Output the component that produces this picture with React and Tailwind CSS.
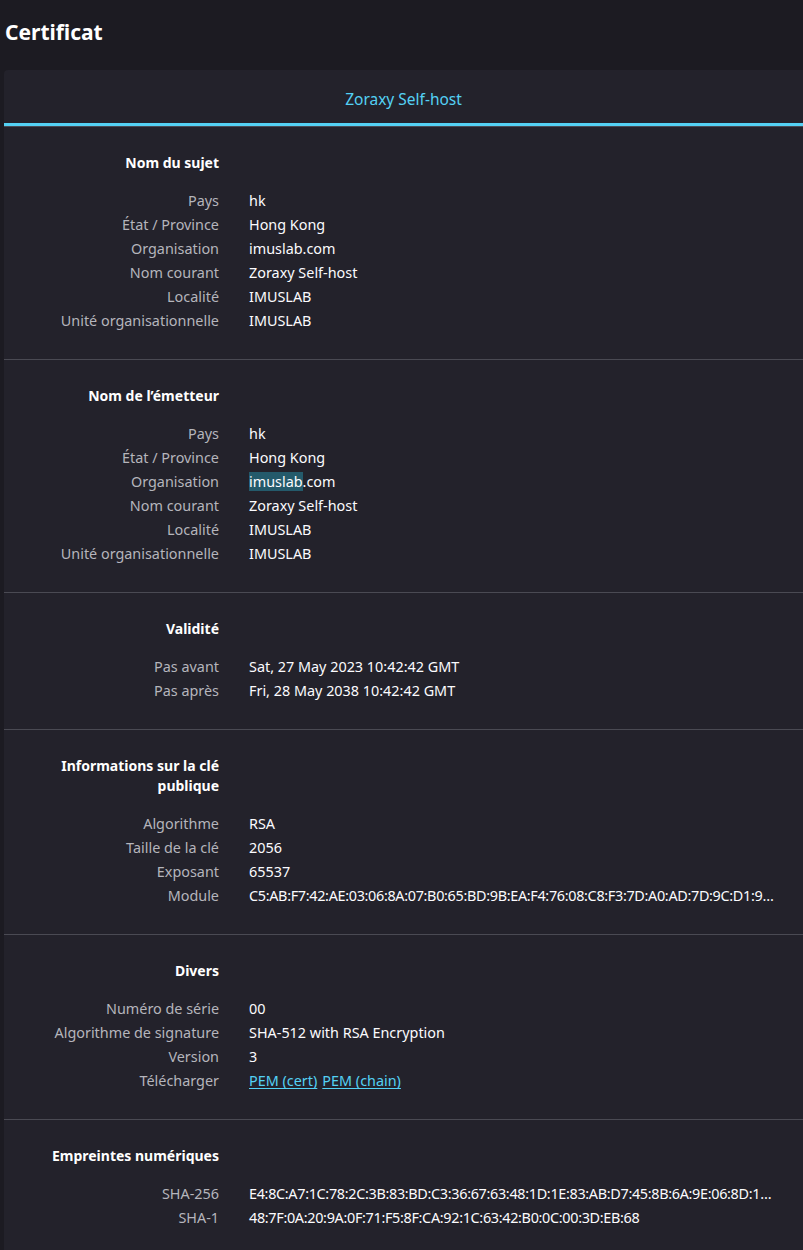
import React from 'react';

const sections = [
    {
        title: 'Nom du sujet',
        rows: [
            ['Pays', 'hk'],
            ['État / Province', 'Hong Kong'],
            ['Organisation', 'imuslab.com'],
            ['Nom courant', 'Zoraxy Self-host'],
            ['Localité', 'IMUSLAB'],
            ['Unité organisationnelle', 'IMUSLAB'],
        ],
    },
    {
        title: 'Nom de l’émetteur',
        rows: [
            ['Pays', 'hk'],
            ['État / Province', 'Hong Kong'],
            ['Organisation', 'selected'],
            ['Nom courant', 'Zoraxy Self-host'],
            ['Localité', 'IMUSLAB'],
            ['Unité organisationnelle', 'IMUSLAB'],
        ],
    },
    {
        title: 'Validité',
        rows: [
            ['Pas avant', 'Sat, 27 May 2023 10:42:42 GMT'],
            ['Pas après', 'Fri, 28 May 2038 10:42:42 GMT'],
        ],
    },
    {
        title: 'Informations sur la clé publique',
        rows: [
            ['Algorithme', 'RSA'],
            ['Taille de la clé', '2056'],
            ['Exposant', '65537'],
            ['Module', 'C5:AB:F7:42:AE:03:06:8A:07:B0:65:BD:9B:EA:F4:76:08:C8:F3:7D:A0:AD:7D:9C:D1:9…', true],
        ],
    },
    {
        title: 'Divers',
        rows: [
            ['Numéro de série', '00'],
            ['Algorithme de signature', 'SHA-512 with RSA Encryption'],
            ['Version', '3'],
            ['Télécharger', 'links'],
        ],
    },
    {
        title: 'Empreintes numériques',
        rows: [
            ['SHA-256', 'E4:8C:A7:1C:78:2C:3B:83:BD:C3:36:67:63:48:1D:1E:83:AB:D7:45:8B:6A:9E:06:8D:1…', true],
            ['SHA-1', '48:7F:0A:20:9A:0F:71:F5:8F:CA:92:1C:63:42:B0:0C:00:3D:EB:68', true],
        ],
    },
];

const Value = ({ value, tight }) => {
    if (value === 'selected') {
        return (
            <span>
                <span className="bg-[#245a6b]">imuslab</span>.com
            </span>
        );
    }
    if (value === 'links') {
        return (
            <span className="flex gap-[5px]">
                <a href="#" className="text-[#54d1f4] underline underline-offset-2">PEM (cert)</a>
                <a href="#" className="text-[#54d1f4] underline underline-offset-2">PEM (chain)</a>
            </span>
        );
    }
    return <span className={`whitespace-nowrap ${tight ? 'tracking-[-0.32px]' : ''}`}>{value}</span>;
};

const Section = ({ title, rows }) => (
    <div className="pt-[26px] pb-[26px] border-b border-[#4a4a53]">
        <div className="flex">
            <div className="w-[170px] ml-[45px] text-right font-bold text-white leading-[20px] text-[14px]">
                {title}
            </div>
        </div>
        <div className="mt-[16px] flex flex-col">
            {rows.map(([label, value, tight]) => (
                <div key={label} className="flex leading-6">
                    <div className="w-[170px] ml-[45px] shrink-0 text-right text-[#b5b5bc] whitespace-nowrap">
                        {label}
                    </div>
                    <div className="ml-[30px] min-w-0 text-[#fbfbfe]">
                        <Value value={value} tight={tight} />
                    </div>
                </div>
            ))}
        </div>
    </div>
);

export default function App() {
    return (
        <div
            className="min-h-[1250px] bg-[#1c1b22] text-[14.4px] text-[#fbfbfe]"
            style={{ fontFamily: '"Noto Sans", "Open Sans", sans-serif' }}
        >
            <header className="h-[70px] flex items-center px-[5px] pb-[4px]">
                <h1 className="text-[21px] font-bold text-white">Certificat</h1>
            </header>
            <div className="ml-[4px] bg-[#23222b] rounded-tl-[4px]">
                <div className="h-[56px] flex items-center justify-center border-b-[3px] border-[#54d1f4]">
                    <span className="text-[15.5px] text-[#54d1f4] pt-[6px]">Zoraxy Self-host</span>
                </div>
                <div className="h-px bg-[#4a4a53]" />
                {sections.map((s) => (
                    <Section key={s.title} {...s} />
                ))}
            </div>
        </div>
    );
}
